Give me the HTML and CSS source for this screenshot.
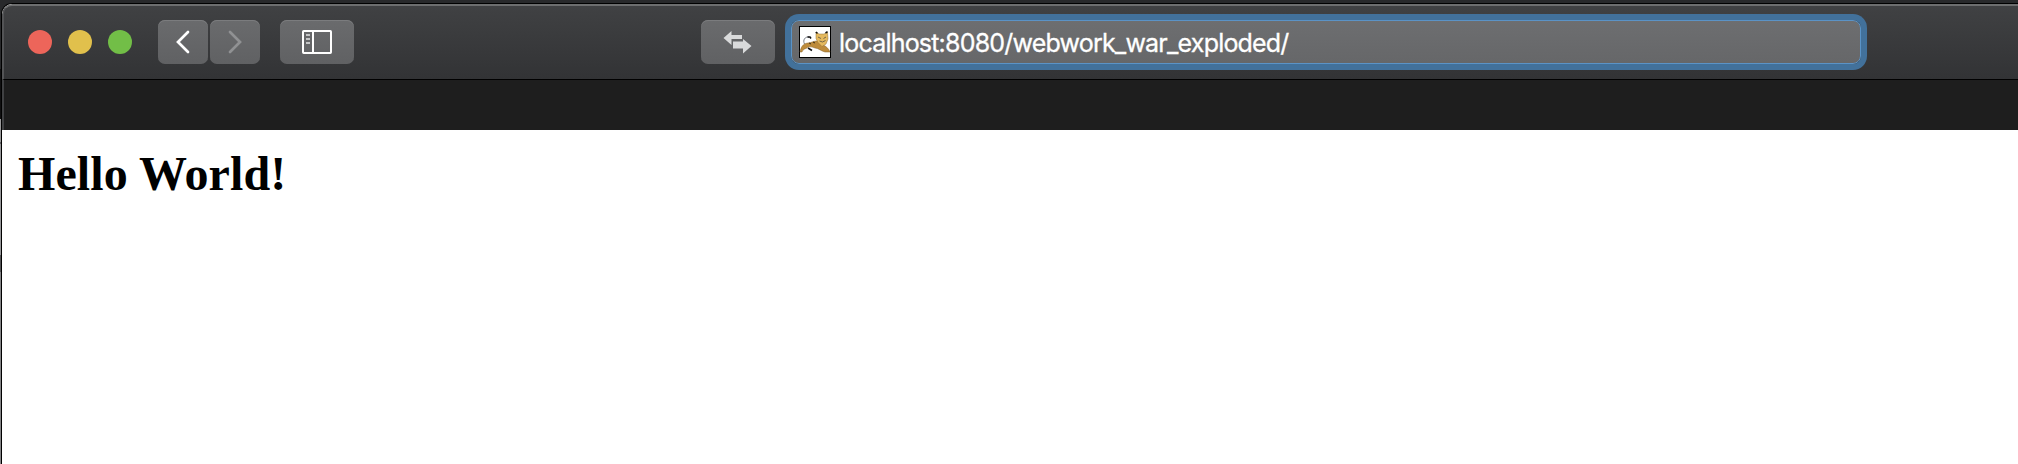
FILE: index.html
```html
<!DOCTYPE html>
<html lang="en">
<head>
<meta charset="utf-8">
<title>localhost</title>
<link rel="stylesheet" href="styles.css">
</head>
<body>
<div class="desktop">
<div class="behind"></div>
<main class="window">
  <header class="toolbar">
    <div class="lights"><span class="light close"></span><span class="light minimize"></span><span class="light expand"></span></div>
    <div class="nav">
      <button class="button arrow" aria-label="Back"><svg width="50" height="44" viewBox="0 0 50 44"><path d="M30 12L20 22l10 10" fill="none" stroke="#fff" stroke-width="2.7" stroke-linecap="round"/></svg></button>
      <button class="button arrow" aria-label="Forward"><svg width="50" height="44" viewBox="0 0 50 44"><path d="M20 12l10 10-10 10" fill="none" stroke="#909193" stroke-width="2.7" stroke-linecap="round"/></svg></button>
    </div>
    <button class="button wide" aria-label="Sidebar"><svg width="74" height="44" viewBox="0 0 74 44"><rect x="23" y="11" width="28" height="22" rx=".7" fill="none" stroke="#fff" stroke-width="2"/><path d="M33 11v22" stroke="#fff" stroke-width="2"/><path d="M26 15h4M26 19h4M26 23h4" stroke="#c4c5c6" stroke-width="2"/></svg></button>
    <button class="button wide swap" aria-label="Switch"><svg width="74" height="44" viewBox="0 0 74 44"><path d="M22.500 18L30.500 11v4H41v4H30.500v6z" fill="#d9dadb"/><path d="M32 21.500H42v-2.500l8.500 7-8.500 7.500v-5H32z" fill="#d9dadb"/><path d="M31 20.200h11" stroke="#656668"/></svg></button>
    <div class="address">
      <svg class="favicon" width="32" height="32" viewBox="0 0 32 32">
        <rect x=".5" y=".5" width="31" height="31" fill="#fff" stroke="#000"/>
        <path d="M5.500 18C3.500 14 6 10.500 10 11" fill="none" stroke="#777d87" stroke-width="1"/>
        <path d="M8.500 11l2.500 0 1 1.500M9 22l4 2.500" fill="none" stroke="#111" stroke-width="1.600"/>
        <path d="M1 26C2 21 4 17.500 9 17c4-.5 6-2 9-2l6 4c3 1 6 4 7 7h-5c-4-1-7-4-10-4-3-1-6-2-8 0-2 1-4 1-5 4z" fill="#bd8b3b" stroke="#866126" stroke-width=".5"/>
        <path d="M17 6l3 2h5l3.500-2 .5 7-2 5-4 2.500-4-4-2-4z" fill="#e5b95e" stroke="#927036" stroke-width=".5"/>
        <path d="M16.800 6l1.700 1.300M26.500 7l2-1.300" stroke="#111" stroke-width="1.500"/>
        <path d="M19 11l3 1.500M27 11l-2.500 1.500M20.500 15l3 1 3-1.500" fill="none" stroke="#665b43" stroke-width=".9"/>
        <path d="M10 17l2 1M14 16l2 1" stroke="#392c16" stroke-width="1"/>
      </svg>
      <span class="url">localhost:8080/webwork_war_exploded/</span>
    </div>
  </header>
  <div class="tabs"></div>
  <section class="page"><h1 class="title">Hello World!</h1></section>
</main>
</div>
</body>
</html>
```
FILE: styles.css
```css
* { box-sizing: border-box; }
body { margin: 0; overflow: hidden; background: #28292b; }
.desktop { display: flex; height: 464px; padding-top: 3px; }
.behind { width: 1px; margin-top: -3px; background: linear-gradient(#28292b 0 69px, #101011 69px 119px, #9a9a9b 119px 142px, #606062 142px 144px, #98989a 144px 255px, #555557 255px 272px, #858587 272px); }
.window { flex: 1; height: 461px; border-top: 1px solid #000; border-left: 1px solid #000; border-top-left-radius: 11px; overflow: hidden; background: #fff; }
.toolbar { display: flex; align-items: flex-start; height: 76px; padding: 14px 0 0 24px; border-top: 2px solid #6d6e6f; border-left: 2px solid #535456; border-bottom: 1px solid #000; border-top-left-radius: 10px; background: linear-gradient(#404143, #323335); }
.lights { display: flex; gap: 16px; margin-top: 10px; }
.light { width: 24px; height: 24px; border-radius: 50%; }
.close { background: #ed655a; }
.minimize { background: #e1c04c; }
.expand { background: #72be47; }
.nav { display: flex; gap: 2px; margin: 0 20px 0 26px; }
.button { display: block; height: 44px; padding: 0; border: 0; border-radius: 7px; background: linear-gradient(#6a6b6d, #606163); box-shadow: inset 0 1px #7b7c7e; }
.button svg { display: block; }
.arrow { width: 50px; }
.wide { width: 74px; }
.swap { margin-left: 347px; }
.address { display: flex; align-items: center; width: 1070px; height: 44px; margin-left: 16px; padding-left: 7px; border: 1px solid #5b93c6; border-radius: 8px; background: linear-gradient(#6d6e70, #666769); box-shadow: 0 0 0 6px #42719b; }
.favicon { display: block; }
.url { margin: 2px 0 0 8px; font: 25px/32px Inter, "Liberation Sans", sans-serif; letter-spacing: -0.8px; color: #fff; -webkit-text-stroke: 0.3px #fff; white-space: nowrap; }
.tabs { height: 50px; border-left: 2px solid #404143; background: #1e1e1e; }
.page { padding: 12px 0 0 16px; }
.title { margin: 0; font: bold 48px/64px "Liberation Serif", serif; letter-spacing: 0.1px; color: #000; }
```
